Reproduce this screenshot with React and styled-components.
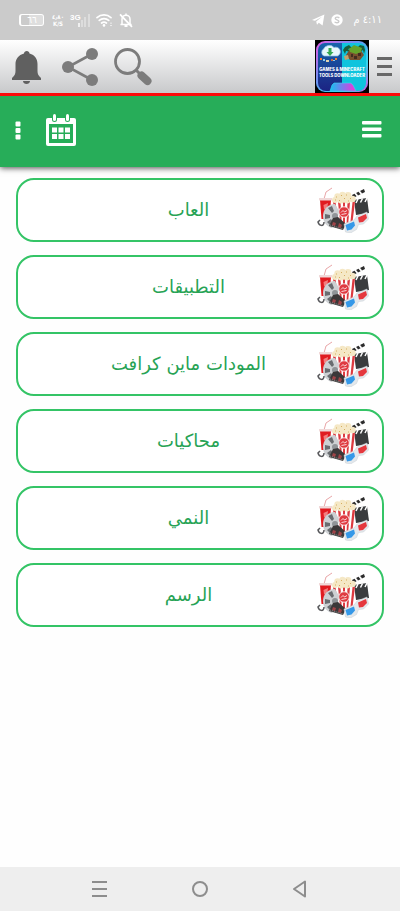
import React from 'react'
import styled, { createGlobalStyle } from 'styled-components'

const categories = [
  { id: 1, text: 'العاب', url: '#games' },
  { id: 2, text: 'التطبيقات', url: '#apps' },
  { id: 3, text: 'المودات ماين كرافت', url: '#mods' },
  { id: 4, text: 'محاكيات', url: '#emulators' },
  { id: 5, text: 'النمي', url: '#anime' },
  { id: 6, text: 'الرسم', url: '#drawing' },
]

const StatusBar = () => (
  <StatusContainer>
    <StatusGroup>
      <Battery>
        <span dir="rtl">٦٦</span>
      </Battery>
      <Speed>
        <span>٤٫٨٠</span>
        <span>K/S</span>
      </Speed>
      <Network>
        <span>3G</span>
        <svg width="12" height="13" viewBox="0 0 12 13" fill="#fff">
          <path d="M0 9h2v4H0z" opacity=".7" />
          <path d="M3 6h2v7H3zM6 3h2v10H6zM10 0h2v13h-2z" opacity=".35" />
        </svg>
      </Network>
      <svg width="17" height="14" viewBox="0 0 17 14" fill="none" stroke="#fff" strokeWidth="1.7" strokeLinecap="round">
        <path d="M1 4.6a10.5 10.5 0 0 1 14 0M3.3 7.4a7 7 0 0 1 9.4 0M5.6 10a3.8 3.8 0 0 1 4.8 0" />
        <circle cx="8" cy="12.4" r="1.3" fill="#fff" stroke="none" />
        <path d="M14 10.4l1-1.200 1 1.200zM14 12l1 1.200 1-1.200z" fill="#fff" stroke="none" />
      </svg>
      <svg width="14" height="15" viewBox="0 0 14 15" fill="none" stroke="#fff" strokeWidth="1.5">
        <path d="M3 11V6.2a4 4 0 0 1 8 0V11M1.4 11.4h11.2M7 .6v1.6" />
        <path d="M5.5 13h3" strokeWidth="2" />
        <path d="M1 1.4l12 12.4" strokeWidth="1.8" />
      </svg>
    </StatusGroup>
    <StatusGroup>
      <svg width="13" height="12" viewBox="0 0 13 12" fill="#fff">
        <path d="M0 6L12.4.6 10.6 11.4 6.8 8.7 5 10.7 4.2 7.4 10 2.8 3 6.8z" />
      </svg>
      <svg width="12" height="12" viewBox="0 0 12 12">
        <circle cx="6" cy="6" r="5.7" fill="#fff" />
        <path d="M8.2 4.1C7.4 2.7 4.3 2.8 4.2 4.4 4.1 6 8 5.6 7.9 7.4 7.8 9.2 4.4 9.2 3.7 7.7" fill="none" stroke="#cbcbcb" strokeWidth="1.4" />
      </svg>
      <Clock dir="rtl">٤:١١ م</Clock>
    </StatusGroup>
  </StatusContainer>
)

const AppLogo = () => (
  <svg width="54" height="53" viewBox="0 0 54 53">
    <defs>
      <linearGradient id="edge" x1="0" y1="0" x2="1" y2="1">
        <stop offset="0" stopColor="#e65be4" />
        <stop offset=".4" stopColor="#6d8ff0" />
        <stop offset=".7" stopColor="#35d9ee" />
        <stop offset="1" stopColor="#d94fe0" />
      </linearGradient>
      <linearGradient id="navy" x1="0" y1="0" x2="0" y2="1">
        <stop offset="0" stopColor="#1663ab" />
        <stop offset="1" stopColor="#1c2383" />
      </linearGradient>
      <linearGradient id="tab" x1="0" y1="0" x2="1" y2="0">
        <stop offset="0" stopColor="#12c5f0" />
        <stop offset=".5" stopColor="#7f75ee" />
        <stop offset="1" stopColor="#fb2fd2" />
      </linearGradient>
    </defs>
    <rect width="54" height="53" fill="#000" />
    <rect x="1" y="1" width="52" height="51" rx="9" fill="url(#edge)" />
    <path d="M27 3v48H11a8 8 0 0 1-8-8V10a7 7 0 0 1 7-7z" fill="url(#navy)" />
    <path d="M27 3h17a7 7 0 0 1 7 7v33a8 8 0 0 1-8 8H27z" fill="#0fc4dd" />
    <path d="M15 51l2-6 2-2h17l2 2 3 6z" fill="url(#tab)" stroke="#39d6f4" strokeWidth=".6" />
    <path d="M9 16a4 4 0 0 1-.5-7A6 6 0 0 1 13 5.500a6 6 0 0 1 6 2 4.500 4.500 0 0 1 3.500 8.500z" fill="#e6f7fc" stroke="#89bcdf" strokeWidth=".7" />
    <path d="M13.500 8h3v4h2l-3.500 4-3.500-4h2z" fill="#34a852" />
    <path d="M5 18h2v2H5zM20 18h2v2h-2z" fill="#ef7f35" />
    <path d="M8 19h2v2H8zM18 20h2v1h-2z" fill="#8ccbed" />
    <path d="M11 20h3v2h-3z" fill="#ded2b0" />
    <path d="M16 19h2v2h-2z" fill="#c06545" />
    <path d="M30 7l4-2 3 3-4 1 3 3-5-1-1 3-2-4zM49 6l-4-1-3 3 4 1-2 4 4-3 1 4 1-4z" fill="#185d3a" />
    <path d="M31 15l4-6h10l4 6-4 5H35z" fill="#79502f" />
    <path d="M34 9l5-4 8 3-1 4-5 2-6-2z" fill="#65a52c" />
    <path d="M36 14h2v3h-2zM43 13h3v3h-3zM39 16h3v3h-3z" fill="#422d20" />
    <path d="M29 16l4-1 1 4-4 1z" fill="#c4a16a" />
    <g fill="#fff" fontFamily="Inter, sans-serif" fontWeight="800" fontSize="4.200" textAnchor="middle">
      <text x="27" y="31">GAMES &amp; MINECRAFT</text>
      <text x="27" y="37">TOOLS DOWNLOADER</text>
    </g>
  </svg>
)

const Toolbar = () => (
  <ToolbarContainer>
    <IconGroup>
      <IconButton type="button" aria-label="الإشعارات">
        <svg width="40" height="40" viewBox="0 0 40 40" fill="#606060">
          <path d="M17 6.500C17 3 22.500 3 22.500 6.500 28 8 30.500 12 30.500 17v7c0 3 .8 4.500 3.500 7v2H5v-2c2.700-2.500 3.500-4 3.500-7v-7C8.500 12 11.500 8 17 6.500zM16 34h7c0 4-7 4-7 0z" />
        </svg>
      </IconButton>
      <IconButton type="button" aria-label="مشاركة">
        <svg width="40" height="40" viewBox="0 0 40 40" fill="#7c7c7c">
          <path d="M32 7L8 20l24 13" fill="none" stroke="#7c7c7c" strokeWidth="2.600" />
          <circle cx="8" cy="20" r="6" />
          <circle cx="32" cy="7" r="6" />
          <circle cx="32" cy="33" r="6" />
        </svg>
      </IconButton>
      <IconButton type="button" aria-label="بحث">
        <svg width="40" height="40" viewBox="0 0 40 40" fill="none" stroke="#7c7c7c">
          <circle cx="14.500" cy="14.500" r="12" strokeWidth="2.800" />
          <path d="M23 23l5 5" strokeWidth="3" />
          <path d="M28.500 28.500l6 5.500" strokeWidth="8" strokeLinecap="round" />
        </svg>
      </IconButton>
    </IconGroup>
    <BrandGroup>
      <AppLogo />
      <IconButton type="button" aria-label="القائمة">
        <svg width="16" height="20" viewBox="0 0 16 20" fill="#686868">
          <path d="M0 0h15v3H0zM0 8h15v3H0zM0 16h15v3H0z" />
        </svg>
      </IconButton>
    </BrandGroup>
  </ToolbarContainer>
)

const Nav = () => (
  <NavContainer>
    <NavGroup>
      <IconButton type="button" aria-label="المزيد">
        <svg width="6" height="20" viewBox="0 0 6 20" fill="#fff">
          <rect x=".5" y="1.500" width="5" height="5" rx="1" />
          <rect x=".5" y="8" width="5" height="5" rx="1" />
          <rect x=".5" y="14.500" width="5" height="5" rx="1" />
        </svg>
      </IconButton>
      <IconButton type="button" aria-label="التقويم">
        <svg width="30" height="34" viewBox="0 0 30 34">
          <path d="M2 5h26a2 2 0 0 1 2 2v24a2 2 0 0 1-2 2H2a2 2 0 0 1-2-2V7a2 2 0 0 1 2-2z" fill="#fff" />
          <path d="M3 11h24v19H3z" fill="#27ad59" />
          <rect x="6" y="0" width="5" height="9" rx="2.500" fill="#27ad59" />
          <rect x="19" y="0" width="5" height="9" rx="2.500" fill="#27ad59" />
          <rect x="7" y="1" width="3" height="7" rx="1.500" fill="#fff" />
          <rect x="20" y="1" width="3" height="7" rx="1.500" fill="#fff" />
          <path d="M6 14.500h5v5H6zM12.500 14.500h5v5h-5zM19 14.500h5v5h-5zM6 21h5v5H6zM12.500 21h5v5h-5zM19 21h5v5h-5z" fill="#fff" />
        </svg>
      </IconButton>
    </NavGroup>
    <IconButton type="button" aria-label="الأقسام">
      <svg width="20" height="18" viewBox="0 0 20 18" fill="#fff">
        <rect x="0" y="0" width="19.500" height="3.600" rx="1" />
        <rect x="0" y="6.500" width="19.500" height="3.600" rx="1" />
        <rect x="0" y="13" width="19.500" height="3.600" rx="1" />
      </svg>
    </IconButton>
  </NavContainer>
)

const CinemaIcon = () => (
  <svg width="52" height="46" viewBox="0 0 52 46" aria-hidden="true">
    {/* drink */}
    <path d="M7 12L9 5l6-4" fill="none" stroke="#e9a6a8" strokeWidth="1" />
    <path d="M3 13h11l-1.500 19H4.500z" fill="#e01b20" />
    <path d="M2 11h13v2.500H2z" fill="#f0d8d8" />
    <path d="M6.500 18l4.500-2-1 7-3-1z" fill="#f27d7d" />
    {/* clapperboard */}
    <path d="M35 8L47 2l1 3-12 6z" fill="#2c2c2c" />
    <path d="M38 6l2.500 3M42 4l2.500 3" stroke="#fff" strokeWidth="1.800" />
    <path d="M37 13l13-2 2 15-13 2z" fill="#3a3c3e" />
    <path d="M41 12l-2 4M45.500 11.500l-2 4M50 11l-2 4" stroke="#fff" strokeWidth="1.500" />
    {/* popcorn */}
    <path d="M16 15h22l-3 24H20z" fill="#fff" />
    <path d="M16 15h2.500l3.500 24h-2zM21 15h2.500l1.500 24h-1.500zM26 15h2v24h-2zM30.500 15H33l-2 24h-1.500zM35.500 15H38l-3 24h-2z" fill="#dd3a40" />
    <circle cx="27" cy="25" r="5.800" fill="#f8dfe0" />
    <circle cx="27" cy="25" r="4.800" fill="#df3a41" />
    <path d="M24 25.500l2-2 1.500 1.500 2.500-1.500M24.500 27.500l5-1" stroke="#fff" strokeWidth=".8" fill="none" />
    <g fill="#f5e8c6">
      <circle cx="18" cy="13" r="3" />
      <circle cx="20.500" cy="9.500" r="3.200" />
      <circle cx="25.500" cy="8" r="3.200" />
      <circle cx="31" cy="8.500" r="3.400" />
      <circle cx="35.500" cy="12" r="3.200" />
      <circle cx="24" cy="13" r="3.500" />
      <circle cx="30" cy="13" r="3.500" />
    </g>
    <path d="M19 10h1M24 8l1 1M29 8h1M22 13l1 1M27 12l1-1M33 11l1 1M18 13h1M31 14h1" stroke="#d6ae60" strokeWidth="1" />
    {/* film reel */}
    <path d="M18 17c-7 0-12 5-12 12 0 6 4 11 9 12l5-5 2-12z" fill="#cdd0d3" />
    <path d="M11 21l4-2 2 5-2 2zM8 27l5 1v3l-5 1zM10 35l4-3 2 3-3 3z" fill="#696c70" />
    <circle cx="18" cy="29" r="3" fill="#909498" />
    <path d="M7 35c0 5-5 4-6 0l2-2" fill="none" stroke="#57585b" strokeWidth="1.500" />
    <path d="M16 31l5-1 8 7-3 6-14-4z" fill="#3b3839" />
    <path d="M16 35l3 1-1 3-3-1zM22 36l3 2-1 3-3-1z" fill="#a04448" />
    <path d="M13 38l13 4" stroke="#aaa" strokeWidth=".8" strokeDasharray="1 1" />
    {/* 3d glasses */}
    <path d="M27 37l10-4 3-4 10-4 1.500 7-5 5-5 .5-2 5-6 3.500-5-1z" fill="#e3e8ec" stroke="#c9cfd4" strokeWidth=".5" />
    <path d="M28.500 38l8.500-3.500 1 4-3.500 4-4.500 1z" fill="#3598e8" />
    <path d="M41 30.500l8-3.500 1 4-4 4-4 .5z" fill="#e5383e" />
  </svg>
)

const SystemNav = () => (
  <SystemContainer>
    <IconButton type="button" aria-label="التطبيقات الأخيرة">
      <svg width="20" height="20" viewBox="0 0 20 20" stroke="#8d8d8d" strokeWidth="2">
        <path d="M3 3h15M3 10h15M3 17h15" />
      </svg>
    </IconButton>
    <IconButton type="button" aria-label="الرئيسية">
      <svg width="20" height="20" viewBox="0 0 20 20" fill="none" stroke="#8d8d8d" strokeWidth="2">
        <circle cx="10" cy="10" r="7" />
      </svg>
    </IconButton>
    <IconButton type="button" aria-label="رجوع">
      <svg width="20" height="20" viewBox="0 0 20 20" fill="none" stroke="#8d8d8d" strokeWidth="2" strokeLinejoin="round">
        <path d="M3 10l11-7.500v15z" />
      </svg>
    </IconButton>
  </SystemContainer>
)

const App = () => {
  return (
    <Page>
      <GlobalStyle />
      <StatusBar />
      <Toolbar />
      <Nav />
      <CategoryList>
        {categories.map(category => {
          return (
            <li key={category.id}>
              <CategoryLink href={category.url}>
                <span dir="rtl">{category.text}</span>
                <CinemaIcon />
              </CategoryLink>
            </li>
          )
        })}
      </CategoryList>
      <SystemNav />
    </Page>
  )
}

const GlobalStyle = createGlobalStyle`
  * {
    box-sizing: border-box;
  }
  html {
    font-size: 16px;
  }
  body {
    margin: 0;
    background: #fefefe;
    font-family: "DejaVu Sans", sans-serif;
  }
  svg {
    display: block;
    flex-shrink: 0;
  }
`

const Page = styled.div`
  min-height: 100vh;
  display: flex;
  flex-direction: column;
`

const IconButton = styled.button`
  display: flex;
  align-items: center;
  justify-content: center;
  padding: 0;
  border: none;
  background: transparent;
  cursor: pointer;
`

const StatusContainer = styled.div`
  height: 40px;
  padding: 0 18px 0 19px;
  display: flex;
  align-items: center;
  justify-content: space-between;
  background: #cbcbcb;
  color: #fff;
`

const StatusGroup = styled.div`
  display: flex;
  align-items: center;
  gap: 6px;
`

const Battery = styled.div`
  width: 25px;
  height: 12px;
  margin-right: 2px;
  border: 1px solid #fff;
  border-left-width: 2px;
  border-radius: 3px;
  display: flex;
  align-items: center;
  justify-content: center;
  background: linear-gradient(to left, #dedede 65%, #cbcbcb 65%) padding-box;
  font-size: 9px;
  line-height: 10px;
`

const Speed = styled.div`
  width: 12px;
  display: flex;
  flex-direction: column;
  align-items: center;
  font-family: "DejaVu Sans Condensed", "DejaVu Sans", sans-serif;
  font-size: 6px;
  font-weight: 700;
  line-height: 7px;
`

const Network = styled.div`
  display: flex;
  align-items: center;
  span {
    align-self: flex-start;
    width: 8px;
    font-family: "Liberation Sans", sans-serif;
    font-size: 8px;
    font-weight: 700;
    line-height: 8px;
  }
`

const Clock = styled.time`
  margin-left: 4px;
  font-family: "DejaVu Sans Condensed", "DejaVu Sans", sans-serif;
  font-size: 11px;
  line-height: 16px;
`

/* sits above the shadow of the green bar */
const ToolbarContainer = styled.header`
  position: relative;
  z-index: 1;
  height: 56px;
  padding: 0 7px;
  display: flex;
  align-items: center;
  justify-content: space-between;
  border-bottom: 3px solid #fb0a0a;
  background: linear-gradient(#fff, #c8c9cb);
`

const IconGroup = styled.div`
  display: flex;
  gap: 13px;
`

const BrandGroup = styled.div`
  display: flex;
  align-items: center;
  gap: 8px;
`

const NavContainer = styled.nav`
  height: 71px;
  padding: 0 18px 4px 15px;
  display: flex;
  align-items: center;
  justify-content: space-between;
  background: #27ad59;
  box-shadow: 0 1px 6px rgba(0, 0, 0, 0.7);
`

const NavGroup = styled.div`
  display: flex;
  align-items: center;
  gap: 25px;
`

const CategoryList = styled.ul`
  flex: 1;
  margin: 0;
  padding: 11px 16px;
  display: flex;
  flex-direction: column;
  gap: 13px;
  list-style: none;
`

const CategoryLink = styled.a`
  height: 64px;
  padding: 0 13px 0 42px;
  display: flex;
  align-items: center;
  border: 2px solid #34c466;
  border-radius: 18px;
  background: #fff;
  color: #27a355;
  font-size: 18px;
  line-height: 24px;
  text-decoration: none;
  span {
    flex: 1;
    text-align: center;
  }
`

const SystemContainer = styled.footer`
  height: 44px;
  padding: 0 12%;
  display: flex;
  align-items: center;
  justify-content: space-around;
  background: #eee;
`

export default App
